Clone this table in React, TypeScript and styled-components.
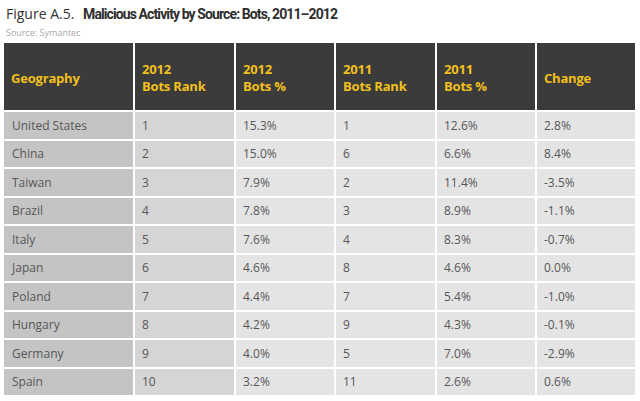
import React from "react";
import styled, { createGlobalStyle } from "styled-components";

const GlobalStyle = createGlobalStyle`
  html, body {
    margin: 0;
    padding: 0;
    background: #ffffff;
  }
  body {
    font-family: "Open Sans", "Liberation Sans", sans-serif;
  }
`;

const Page = styled.div`
  width: 640px;
  height: 401px;
  padding: 5px 0 0 4px;
  box-sizing: border-box;
  overflow: hidden;
`;

const Title = styled.div`
  font-size: 14px;
  line-height: 18px;
  color: #333;
  padding-left: 2px;
  white-space: nowrap;

  b {
    font-family: Roboto, "Open Sans", sans-serif;
    font-weight: 700;
    color: #2e2e2e;
    margin-left: 5px;
    letter-spacing: -0.9px;
  }
`;

const Source = styled.div`
  font-size: 9px;
  line-height: 12px;
  color: #a8a8a8;
  padding-left: 2px;
  margin-top: 4px;
`;

const Grid = styled.div`
  margin-top: 4px;
  display: grid;
  grid-template-columns: 129px 99px 98px 99px 98px 98px;
  grid-template-rows: 67px repeat(10, 26.5px);
  gap: 2px;
`;

const HeadCell = styled.div`
  background: #3b3b3b;
  color: #f2c01c;
  font-weight: 700;
  font-size: 13px;
  line-height: 17px;
  letter-spacing: -0.2px;
  display: flex;
  align-items: center;
  padding: 3px 0 0 7px;
  box-sizing: border-box;
`;

const Cell = styled.div<{ $tone: "dark" | "mid" | "light" }>`
  background: ${(p) =>
    p.$tone === "dark" ? "#c4c4c4" : p.$tone === "mid" ? "#d5d5d5" : "#e4e4e4"};
  color: #575757;
  font-size: 12px;
  display: flex;
  align-items: center;
  padding-left: ${(p) => (p.$tone === "dark" ? "8px" : "7px")};
  box-sizing: border-box;
`;

const headers = [
  ["Geography"],
  ["2012", "Bots Rank"],
  ["2012", "Bots %"],
  ["2011", "Bots Rank"],
  ["2011", "Bots %"],
  ["Change"],
];

const rows = [
  ["United States", "1", "15.3%", "1", "12.6%", "2.8%"],
  ["China", "2", "15.0%", "6", "6.6%", "8.4%"],
  ["Taiwan", "3", "7.9%", "2", "11.4%", "-3.5%"],
  ["Brazil", "4", "7.8%", "3", "8.9%", "-1.1%"],
  ["Italy", "5", "7.6%", "4", "8.3%", "-0.7%"],
  ["Japan", "6", "4.6%", "8", "4.6%", "0.0%"],
  ["Poland", "7", "4.4%", "7", "5.4%", "-1.0%"],
  ["Hungary", "8", "4.2%", "9", "4.3%", "-0.1%"],
  ["Germany", "9", "4.0%", "5", "7.0%", "-2.9%"],
  ["Spain", "10", "3.2%", "11", "2.6%", "0.6%"],
];

const App = () => {
  return (
    <Page>
      <GlobalStyle />
      <Title>
        Figure A.5. <b>Malicious Activity by Source: Bots, 2011–2012</b>
      </Title>
      <Source>Source: Symantec</Source>
      <Grid>
        {headers.map((h, i) => (
          <HeadCell key={i}>
            <div>
              {h.map((line) => (
                <div key={line}>{line}</div>
              ))}
            </div>
          </HeadCell>
        ))}
        {rows.map((r) =>
          r.map((v, i) => (
            <Cell key={r[0] + i} $tone={i === 0 ? "dark" : i === 1 ? "mid" : "light"}>
              {v}
            </Cell>
          ))
        )}
      </Grid>
    </Page>
  );
};

export default App;
